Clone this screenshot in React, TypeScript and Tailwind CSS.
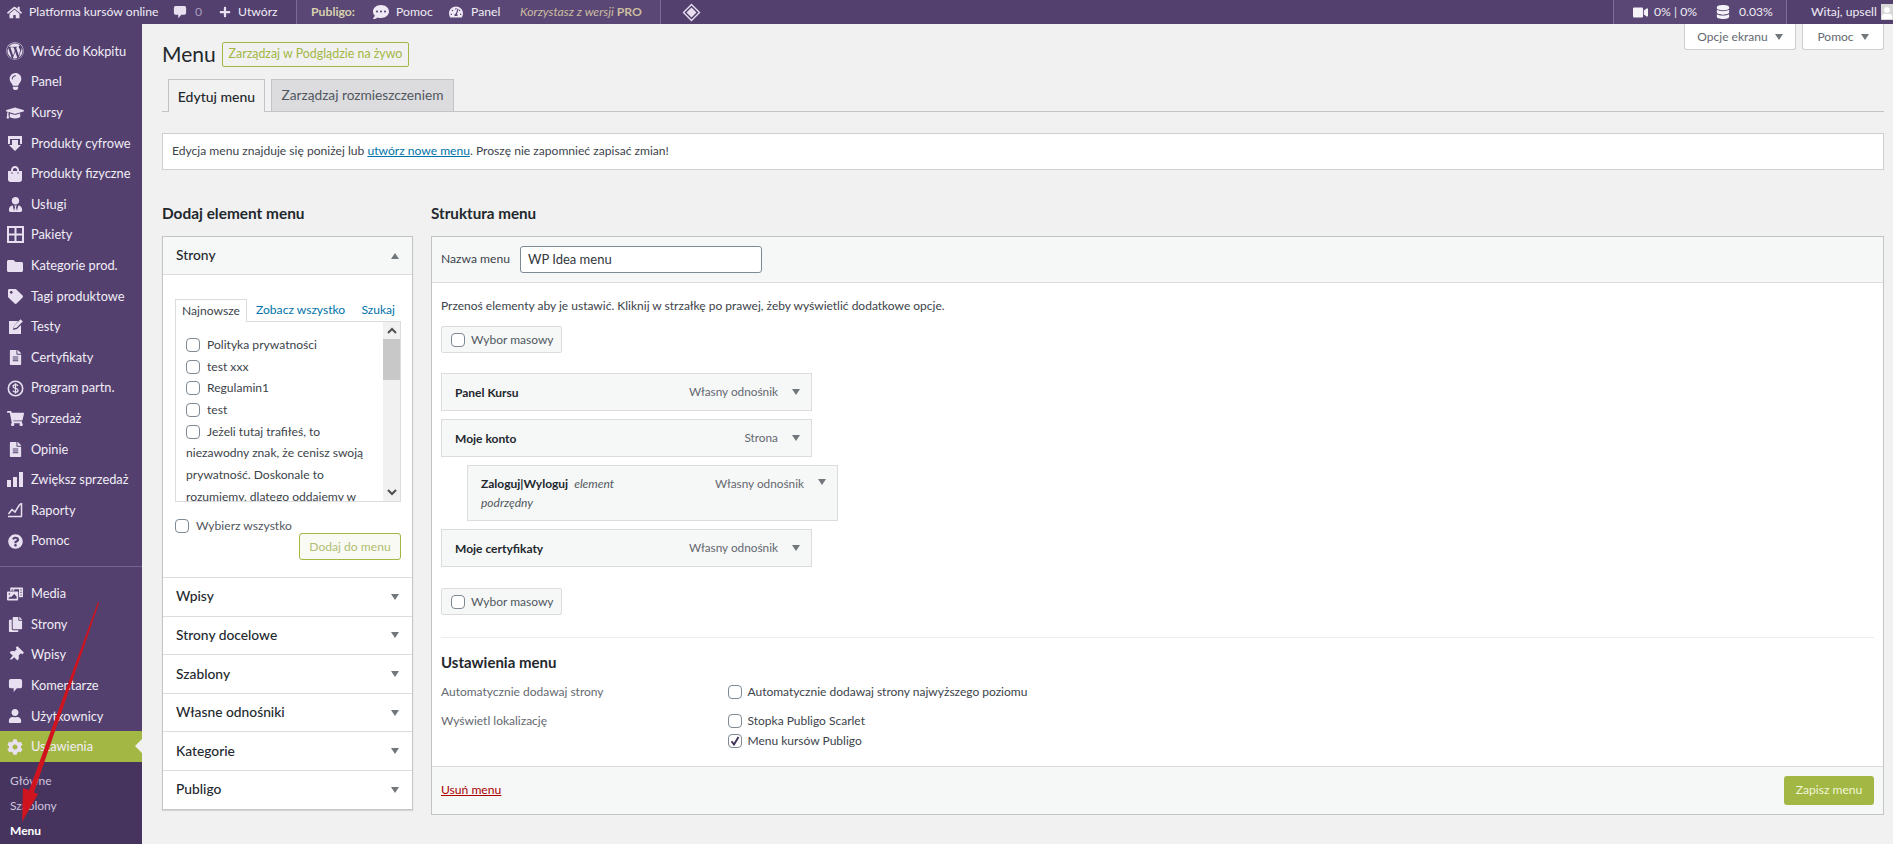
import React from "react";
import {
  FaWordpress, FaLightbulb, FaGraduationCap, FaShoppingBag, FaUserTie, FaFolder, FaTag,
  FaFileAlt, FaShoppingCart, FaQuestionCircle, FaCopy, FaThumbtack, FaUser,
  FaCog, FaHome, FaPlus, FaCommentDots, FaTachometerAlt, FaVideo, FaDatabase,
  FaPhotoVideo,
} from "react-icons/fa";

const Grid = () => (
  <svg width="17" height="17" viewBox="0 0 17 17" fill="none" stroke="currentColor" strokeWidth="2">
    <rect x="1" y="1" width="15" height="15" />
    <path d="M8.5 1v15M1 8.5h15" />
  </svg>
);

const Dollar = () => (
  <svg width="17" height="17" viewBox="0 0 17 17" fill="none" stroke="currentColor">
    <circle cx="8.5" cy="8.5" r="7.2" strokeWidth="1.6" />
    <path d="M11 6c-.5-1-1.4-1.3-2.5-1.3-1.3 0-2.4.6-2.4 1.8 0 2.6 5 1.2 5 3.8 0 1.2-1.2 1.9-2.6 1.9-1.2 0-2.1-.5-2.6-1.4M8.5 3.2v10.6" strokeWidth="1.3" />
  </svg>
);

const Bars = () => (
  <svg width="16" height="16" viewBox="0 0 16 16" fill="currentColor">
    <rect x="0" y="8" width="4" height="7" />
    <rect x="6" y="5" width="4" height="10" />
    <rect x="12" y="0" width="4" height="15" />
  </svg>
);

const LineChart = () => (
  <svg width="16" height="16" viewBox="0 0 16 16" fill="none" stroke="currentColor" strokeWidth="1.5">
    <path d="M1 14.5h14M14.5 1v13.5" />
    <path d="M1.5 12 5 7.5l3 2.5 4-6.5 2-2" />
  </svg>
);

const Bubble = ({ size = 15 }: { size?: number }) => (
  <svg width={size} height={size} viewBox="0 0 16 16" fill="currentColor">
    <path d="M3 1h10a2 2 0 0 1 2 2v6a2 2 0 0 1-2 2H9.5L6 15v-4H3a2 2 0 0 1-2-2V3a2 2 0 0 1 2-2z" />
  </svg>
);

const DownloadDoc = () => (
  <svg width="16" height="17" viewBox="0 0 16 17" fill="currentColor">
    <path d="M1 1h14v8h-2V4H3v5H1z" />
    <path d="M5 5h6v5h3l-6 6-6-6h3z" />
  </svg>
);

const TestPage = () => (
  <svg width="17" height="17" viewBox="0 0 17 17" fill="currentColor">
    <path d="M2 3h9L7 8l-1 4 4-1 4-4v9H2z" />
    <path d="M13.5 1.2l2.3 2.3-6.3 6.3-2.6.4.4-2.7z" />
  </svg>
);

const mainMenu: [React.ReactNode, string][] = [
  [<FaWordpress size={18} />, "Wróć do Kokpitu"],
  [<FaLightbulb size={17} />, "Panel"],
  [<FaGraduationCap size={18} />, "Kursy"],
  [<DownloadDoc />, "Produkty cyfrowe"],
  [<FaShoppingBag size={16} />, "Produkty fizyczne"],
  [<FaUserTie size={15} />, "Usługi"],
  [<Grid />, "Pakiety"],
  [<FaFolder size={16} />, "Kategorie prod."],
  [<FaTag size={15} />, "Tagi produktowe"],
  [<TestPage />, "Testy"],
  [<FaFileAlt size={15} />, "Certyfikaty"],
  [<Dollar />, "Program partn."],
  [<FaShoppingCart size={17} />, "Sprzedaż"],
  [<FaFileAlt size={15} />, "Opinie"],
  [<Bars />, "Zwiększ sprzedaż"],
  [<LineChart />, "Raporty"],
  [<FaQuestionCircle size={15} />, "Pomoc"],
];

const wpMenu: [React.ReactNode, string][] = [
  [<FaPhotoVideo size={16} />, "Media"],
  [<FaCopy size={15} />, "Strony"],
  [<FaThumbtack size={15} className="rotate-45" />, "Wpisy"],
  [<Bubble />, "Komentarze"],
  [<FaUser size={14} />, "Użytkownicy"],
];

const Caret = ({ up = false, className = "" }: { up?: boolean; className?: string }) => (
  <svg width="8" height="6" viewBox="0 0 8 6" className={className}>
    <path d={up ? "M4 0l4 6H0z" : "M0 0h8L4 6z"} fill="#72777c" />
  </svg>
);

const Check = ({ checked = false }: { checked?: boolean }) => (
  <span className="flex h-[14px] w-[14px] shrink-0 items-center justify-center rounded-[4px] border border-[#7e8993] bg-white">
    {checked && (
      <svg width="10" height="10" viewBox="0 0 10 10">
        <path d="M1.5 5.2 4 8.5 8.5 1" fill="none" stroke="#3f3358" strokeWidth="1.9" />
      </svg>
    )}
  </span>
);

const MenuRow = ({ icon, label }: { icon: React.ReactNode; label: string }) => (
  <div className="flex h-[30.7px] items-center whitespace-nowrap text-[12.8px] text-[#f1edf5]">
    <span className="flex w-[31px] shrink-0 items-center justify-center pr-[1px] text-[#e8e0f0]">{icon}</span>
    {label}
  </div>
);

const MenuItem = ({ name, type, note }: { name: string; type: string; note?: boolean }) => (
  <div className={`flex w-[371px] border border-[#dcdcde] bg-[#f6f7f7] pl-[13px] pr-[11px] text-[12px] ${note ? "h-[56px] pt-[8px]" : "h-[38px] items-center"}`}>
    <div className="w-[150px] leading-[19px]">
      <span className="font-bold text-[#23282d]">{name}</span>
      {note && <i className="ml-[6px] text-[#50575e]">element podrzędny</i>}
    </div>
    <span className={`ml-auto text-[11.8px] text-[#646970] ${note ? "leading-[19px]" : ""}`}>{type}</span>
    <Caret className={`ml-[14px] ${note ? "mt-[5px]" : ""}`} />
  </div>
);

const BulkSelect = () => (
  <div className="flex h-[27px] w-[121px] items-center gap-[6px] rounded-[2px] border border-[#dcdcde] bg-[#f6f7f7] pl-[9px] text-[12px] text-[#50575e]">
    <Check />
    Wybor masowy
  </div>
);

const pages = ["Polityka prywatności", "test xxx", "Regulamin1", "test"];
const closedBoxes = ["Wpisy", "Strony docelowe", "Szablony", "Własne odnośniki", "Kategorie", "Publigo"];

export default function App() {
  return (
    <div className="relative flex h-[844px] flex-col overflow-hidden bg-[#f1f1f1] font-['Lato',sans-serif] text-[#3c434a]">
      {/* Top bar */}
      <header className="flex h-6 shrink-0 items-center whitespace-nowrap bg-[#53406f] text-[12.2px] text-[#f0ecf4]">
        <FaHome size={15} className="ml-[7px] text-[#e8e0f0]" />
        <span className="ml-[7px] w-[129px]">Platforma kursów online</span>
        <span className="ml-[15px] text-[#e8e0f0]"><Bubble size={14} /></span>
        <span className="ml-2 text-[#a99bbd]">0</span>
        <FaPlus size={12} className="ml-[17px] text-[#e8e0f0]" />
        <span className="ml-[7px] w-[38px]">Utwórz</span>
        <div className="ml-5 flex h-full w-[365px] items-center border-x border-[#7d6b97] bg-[#5a4775]">
          <b className="ml-[14px] w-[44px] font-bold text-[#d9d2b0]">Publigo:</b>
          <FaCommentDots size={16} className="ml-[18px] text-[#efe9f5]" />
          <span className="ml-[7px] w-[38px]">Pomoc</span>
          <FaTachometerAlt size={14} className="ml-[15px] text-[#efe9f5]" />
          <span className="ml-2 w-[28px]">Panel</span>
          <i className="ml-[21px] text-[#cbbda0]">
            Korzystasz z wersji <b className="font-bold not-italic">PRO</b>
          </i>
        </div>
        <svg width="19" height="19" viewBox="0 0 19 19" className="ml-[21px]" fill="none" stroke="#e8e0f0" strokeWidth="1.4">
          <path d="M9.5 1.5l8 8-8 8-8-8z" />
          <path d="M9.5 5.5l4 4-4 4-4-4z" fill="#e8e0f0" />
        </svg>
        <div className="ml-auto flex h-full w-[174px] items-center border-x border-[#7d6b97] bg-[#5a4775] pl-[19px]">
          <FaVideo size={15} className="text-[#f5f2f8]" />
          <span className="ml-[6px] w-[42px]">0% | 0%</span>
          <FaDatabase size={14} className="ml-5 text-[#f5f2f8]" />
          <span className="ml-[9px]">0.03%</span>
        </div>
        <span className="ml-6 w-[63px]">Witaj, upsell</span>
        <span className="ml-[7px] flex h-4 w-3 justify-end overflow-hidden bg-[#d8d8d8] text-white">
          <FaUser size={12} className="mt-[3px] shrink-0" />
        </span>
      </header>

      <div className="flex min-h-0 grow">
        {/* Admin menu */}
        <aside className="flex w-[142px] shrink-0 flex-col bg-[#53406f] pt-[12px]">
          {mainMenu.map(([icon, label]) => (
            <MenuRow key={label} icon={icon} label={label} />
          ))}
          <div className="mb-[11px] mt-[10px] h-px bg-[#75648f]" />
          {wpMenu.map(([icon, label]) => (
            <MenuRow key={label} icon={icon} label={label} />
          ))}
          <div className="relative bg-[#a3b744]">
            <MenuRow icon={<FaCog size={16} />} label="Ustawienia" />
            <span className="absolute right-0 top-[8px] h-0 w-0 border-y-[7px] border-r-[7px] border-y-transparent border-r-[#f1f1f1]" />
          </div>
          <div className="flex grow flex-col bg-[#46345f] pl-[10px] pt-[6px] text-[12px] text-[#cfc5dc]">
            <span className="leading-[25px]">Główne</span>
            <span className="leading-[25px]">Szablony</span>
            <span className="font-bold leading-[26px] text-white">Menu</span>
          </div>
        </aside>

        {/* Content */}
        <main className="min-w-0 grow pl-5 pr-[9px]">
          <div className="flex justify-end gap-[6px]">
            <div className="flex h-[26px] w-[112px] items-center justify-center gap-[7px] rounded-b-[3px] border border-t-0 border-[#ccd0d4] bg-white text-[12px] text-[#646970]">
              Opcje ekranu <Caret />
            </div>
            <div className="flex h-[26px] w-[82px] items-center justify-center gap-[7px] rounded-b-[3px] border border-t-0 border-[#ccd0d4] bg-white text-[12px] text-[#646970]">
              Pomoc <Caret />
            </div>
          </div>

          <div className="-mt-[11px] flex items-center">
            <h1 className="w-[52px] text-[21px] leading-[30px] text-[#23282d]">Menu</h1>
            <span className="ml-[8px] flex h-[25px] w-[187px] items-center justify-center rounded-[2px] border border-[#a3b744] text-[12.4px] text-[#a3b744]">
              Zarządzaj w Podglądzie na żywo
            </span>
          </div>

          {/* Tabs */}
          <div className="mt-[10px] flex h-[33px] items-end gap-[6px] border-b border-[#c3c4c7] pl-[6px]">
            <div className="-mb-px flex h-[33px] w-[97px] items-center justify-center border border-b-0 border-[#c3c4c7] bg-[#f1f1f1] text-[14px] font-medium text-[#23282d]">
              Edytuj menu
            </div>
            <div className="flex h-[32px] w-[183px] items-center justify-center border border-b-0 border-[#c3c4c7] bg-[#dcdcde] text-[13.7px] text-[#50575e]">
              Zarządzaj rozmieszczeniem
            </div>
          </div>

          <div className="mt-[21px] flex h-[37px] items-center border border-[#ccd0d4] bg-white pl-[9px] text-[12.1px] text-[#3c434a]">
            <span>
              Edycja menu znajduje się poniżej lub <u className="text-[#0073aa]">utwórz nowe menu</u>. Proszę nie zapomnieć zapisać zmian!
            </span>
          </div>

          <div className="mt-[33px] flex gap-[18px]">
            {/* Left column */}
            <section className="w-[251px] shrink-0">
              <h2 className="text-[15.4px] font-bold leading-[20px] text-[#23282d]">Dodaj element menu</h2>
              <div className="mt-[13px] border border-[#c3c4c7] bg-white shadow-[0_1px_1px_rgba(0,0,0,0.1)]">
                <div className="flex h-[38px] items-center justify-between border-b border-[#dcdcde] bg-[#f6f7f7] pl-[13px] pr-[13px] text-[13.8px] font-medium text-[#23282d]">
                  Strony <Caret up />
                </div>
                <div className="h-[302px] pl-[12px] pr-[11px] pt-[23px] text-[12.1px]">
                  <div className="flex h-[23px] items-end">
                    <div className="-mb-px z-10 flex h-[23px] w-[72px] items-center justify-center border border-b-0 border-[#dcdcde] bg-white text-[#3c434a]">Najnowsze</div>
                    <span className="ml-[9px] pb-[2px] text-[#0073aa]">Zobacz wszystko</span>
                    <span className="ml-auto mr-[6px] pb-[2px] text-[#0073aa]">Szukaj</span>
                  </div>
                  <div className="flex h-[181px] overflow-hidden border border-[#dcdcde]">
                    <div className="w-[208px] overflow-hidden pl-[10px] pt-[12px] leading-[21.7px] text-[#3c434a]">
                      {pages.map((page) => (
                        <div key={page} className="flex h-[21.7px] items-center gap-[7px]">
                          <Check />
                          {page}
                        </div>
                      ))}
                      <div className="flex h-[21.7px] items-center gap-[7px]">
                        <Check />
                        Jeżeli tutaj trafiłeś, to
                      </div>
                      <p className="w-[190px]">niezawodny znak, że cenisz swoją prywatność. Doskonale to rozumiemy, dlatego oddajemy w</p>
                    </div>
                    <div className="flex w-[17px] shrink-0 flex-col items-center bg-[#f1f1f1] text-[#505050]">
                      <div className="flex h-[17px] items-center">
                        <svg width="10" height="7" viewBox="0 0 10 7" fill="none" stroke="currentColor" strokeWidth="2"><path d="M1 6l4-4 4 4" /></svg>
                      </div>
                      <div className="h-[41px] w-full bg-[#c8c8c8]" />
                      <div className="mt-auto flex h-[17px] items-center">
                        <svg width="10" height="7" viewBox="0 0 10 7" fill="none" stroke="currentColor" strokeWidth="2"><path d="M1 1l4 4 4-4" /></svg>
                      </div>
                    </div>
                  </div>
                  <div className="mt-[15px] flex items-center gap-[7px] text-[#50575e]">
                    <Check />
                    Wybierz wszystko
                  </div>
                  <div className="flex justify-end">
                    <span className="-mt-[2px] flex h-[27px] w-[102px] items-center justify-center rounded-[3px] border border-[#a3b744] bg-[#fafaf5] text-[#b0bd72]">
                      Dodaj do menu
                    </span>
                  </div>
                </div>
                {closedBoxes.map((box) => (
                  <div key={box} className="flex h-[38.6px] items-center justify-between border-t border-[#dcdcde] px-[13px] text-[13.8px] font-medium text-[#23282d]">
                    {box} <Caret />
                  </div>
                ))}
              </div>
            </section>

            {/* Right column */}
            <section className="min-w-0 grow">
              <h2 className="text-[15.2px] font-bold leading-[20px] text-[#23282d]">Struktura menu</h2>
              <div className="mt-[13px] border border-[#c3c4c7] bg-white">
                <div className="flex h-[46px] items-center border-b border-[#dcdcde] bg-[#f6f7f7] pl-[9px] text-[12.1px] text-[#3c434a]">
                  <span className="w-[79px]">Nazwa menu</span>
                  <span className="flex h-[27px] w-[242px] items-center rounded-[3px] border border-[#7e8993] bg-white pl-[7px] text-[13px] text-[#32373c]">WP Idea menu</span>
                </div>
                <div className="px-[9px] pt-[13px] text-[12px]">
                  <p className="leading-[20px] text-[#3c434a]">Przenoś elementy aby je ustawić. Kliknij w strzałkę po prawej, żeby wyświetlić dodatkowe opcje.</p>
                  <div className="mt-[10px]"><BulkSelect /></div>
                  <div className="mt-[20px] flex flex-col gap-[8px]">
                    <MenuItem name="Panel Kursu" type="Własny odnośnik" />
                    <MenuItem name="Moje konto" type="Strona" />
                    <div className="pl-[26px]"><MenuItem name="Zaloguj|Wyloguj" type="Własny odnośnik" note /></div>
                    <MenuItem name="Moje certyfikaty" type="Własny odnośnik" />
                  </div>
                  <div className="mt-[21px]"><BulkSelect /></div>
                  <div className="mt-[22px] border-t border-[#eeeeee] pt-[14px]">
                    <h3 className="text-[15px] font-bold leading-[20px] text-[#23282d]">Ustawienia menu</h3>
                    <div className="mt-[10px] flex h-[20px] items-center">
                      <span className="w-[286.5px] text-[#646970]">Automatycznie dodawaj strony</span>
                      <Check />
                      <span className="ml-[6px] text-[#3c434a]">Automatycznie dodawaj strony najwyższego poziomu</span>
                    </div>
                    <div className="mt-[9px] flex h-[20px] items-center">
                      <span className="w-[286.5px] text-[#646970]">Wyświetl lokalizację</span>
                      <Check />
                      <span className="ml-[6px] text-[#3c434a]">Stopka Publigo Scarlet</span>
                    </div>
                    <div className="flex h-[20px] items-center pl-[286.5px] text-[#3c434a]">
                      <Check checked />
                      <span className="ml-[6px]">Menu kursów Publigo</span>
                    </div>
                  </div>
                </div>
                <div className="mt-[15px] flex h-[48px] items-center justify-between border-t border-[#dcdcde] bg-[#f6f7f7] pl-[9px] pr-[9px] text-[12.1px]">
                  <u className="text-[#a00]">Usuń menu</u>
                  <span className="flex h-[29px] w-[90px] items-center justify-center rounded-[3px] bg-[#a3b744] text-[#f2f6d8]">Zapisz menu</span>
                </div>
              </div>
            </section>
          </div>
        </main>
      </div>

      {/* Red annotation arrow drawn over the screenshot */}
      <svg width="120" height="260" viewBox="0 0 120 260" className="pointer-events-none absolute left-0 top-[590px]">
        <path d="M98 12 99 13 32 208 27 206z" fill="#cf1420" />
        <path d="M22 232 23 198 38 204z" fill="#cf1420" />
      </svg>
    </div>
  );
}
